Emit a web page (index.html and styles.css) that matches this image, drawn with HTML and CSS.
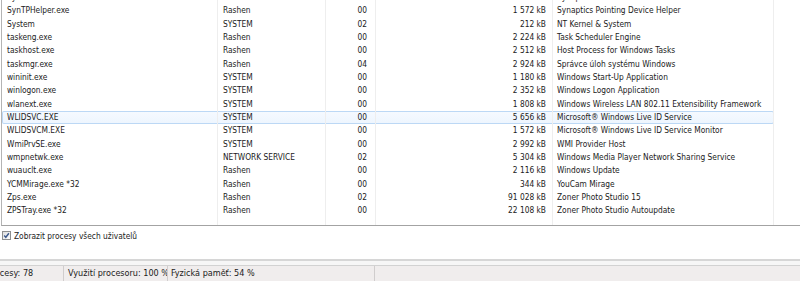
FILE: index.html
```html
<!DOCTYPE html>
<html>
<head>
<meta charset="utf-8">
<link rel="stylesheet" href="styles.css">
</head>
<body>
<div class="window">
  <div class="list">
    <div class="rows">
      <div class="row"><span class="c name">SynTPEnh.exe</span><span class="c user">Rashen</span><span class="c cpu">00</span><span class="c mem">4&nbsp;828 kB</span><span class="c desc">Synaptics TouchPad Enhancements</span></div>
      <div class="row"><span class="c name">SynTPHelper.exe</span><span class="c user">Rashen</span><span class="c cpu">00</span><span class="c mem">1&nbsp;572 kB</span><span class="c desc">Synaptics Pointing Device Helper</span></div>
      <div class="row"><span class="c name">System</span><span class="c user">SYSTEM</span><span class="c cpu">02</span><span class="c mem">212 kB</span><span class="c desc">NT Kernel &amp; System</span></div>
      <div class="row"><span class="c name">taskeng.exe</span><span class="c user">Rashen</span><span class="c cpu">00</span><span class="c mem">2&nbsp;224 kB</span><span class="c desc">Task Scheduler Engine</span></div>
      <div class="row"><span class="c name">taskhost.exe</span><span class="c user">Rashen</span><span class="c cpu">00</span><span class="c mem">2&nbsp;512 kB</span><span class="c desc">Host Process for Windows Tasks</span></div>
      <div class="row"><span class="c name">taskmgr.exe</span><span class="c user">Rashen</span><span class="c cpu">04</span><span class="c mem">2&nbsp;924 kB</span><span class="c desc">Správce úloh systému Windows</span></div>
      <div class="row"><span class="c name">wininit.exe</span><span class="c user">SYSTEM</span><span class="c cpu">00</span><span class="c mem">1&nbsp;180 kB</span><span class="c desc">Windows Start-Up Application</span></div>
      <div class="row"><span class="c name">winlogon.exe</span><span class="c user">SYSTEM</span><span class="c cpu">00</span><span class="c mem">2&nbsp;352 kB</span><span class="c desc">Windows Logon Application</span></div>
      <div class="row"><span class="c name">wlanext.exe</span><span class="c user">SYSTEM</span><span class="c cpu">00</span><span class="c mem">1&nbsp;808 kB</span><span class="c desc">Windows Wireless LAN 802.11 Extensibility Framework</span></div>
      <div class="row selected"><span class="c name">WLIDSVC.EXE</span><span class="c user">SYSTEM</span><span class="c cpu">00</span><span class="c mem">5&nbsp;656 kB</span><span class="c desc">Microsoft® Windows Live ID Service</span></div>
      <div class="row"><span class="c name">WLIDSVCM.EXE</span><span class="c user">SYSTEM</span><span class="c cpu">00</span><span class="c mem">1&nbsp;572 kB</span><span class="c desc">Microsoft® Windows Live ID Service Monitor</span></div>
      <div class="row"><span class="c name">WmiPrvSE.exe</span><span class="c user">SYSTEM</span><span class="c cpu">00</span><span class="c mem">2&nbsp;992 kB</span><span class="c desc">WMI Provider Host</span></div>
      <div class="row"><span class="c name">wmpnetwk.exe</span><span class="c user">NETWORK SERVICE</span><span class="c cpu">02</span><span class="c mem">5&nbsp;304 kB</span><span class="c desc">Windows Media Player Network Sharing Service</span></div>
      <div class="row"><span class="c name">wuauclt.exe</span><span class="c user">Rashen</span><span class="c cpu">00</span><span class="c mem">2&nbsp;116 kB</span><span class="c desc">Windows Update</span></div>
      <div class="row"><span class="c name">YCMMirage.exe *32</span><span class="c user">Rashen</span><span class="c cpu">00</span><span class="c mem">344 kB</span><span class="c desc">YouCam Mirage</span></div>
      <div class="row"><span class="c name">Zps.exe</span><span class="c user">Rashen</span><span class="c cpu">02</span><span class="c mem">91&nbsp;028 kB</span><span class="c desc">Zoner Photo Studio 15</span></div>
      <div class="row"><span class="c name">ZPSTray.exe *32</span><span class="c user">Rashen</span><span class="c cpu">00</span><span class="c mem">22&nbsp;108 kB</span><span class="c desc">Zoner Photo Studio Autoupdate</span></div>
      <div class="row filler"><span class="c name"></span><span class="c user"></span><span class="c cpu"></span><span class="c mem"></span><span class="c desc"></span></div>
    </div>
  </div>
  <div class="options">
    <svg class="check" width="9" height="9" viewBox="0 0 9 9">
      <defs>
        <linearGradient id="cb" x1="0" y1="0" x2="1" y2="1">
          <stop offset="0" stop-color="#dcdcdc"/>
          <stop offset="1" stop-color="#ffffff"/>
        </linearGradient>
      </defs>
      <rect x="0.5" y="0.5" width="8" height="8" fill="url(#cb)" stroke="#8e8f8f"/>
      <path d="M2.2 4.6 L3.8 6.3 L6.9 2.3" fill="none" stroke="#3d5a8c" stroke-width="1.4"/>
    </svg>
    <span class="opt-label">Zobrazit procesy všech uživatelů</span>
  </div>
  <div class="statusbar">
    <div class="panes">
      <div class="pane p1"><span class="shift">Procesy: 78</span></div>
      <div class="pane p2">Využití procesoru: 100 %</div>
      <div class="pane p3">Fyzická paměť: 54 %</div>
      <div class="pane p4"></div>
    </div>
  </div>
</div>
</body>
</html>
```

FILE: styles.css
```css
html, body {
  margin: 0;
  padding: 0;
  background: #ffffff;
}

.window {
  width: 800px;
  height: 281px;
  overflow: hidden;
  display: flex;
  flex-direction: column;
  font-family: "DejaVu Sans Condensed", "DejaVu Sans", sans-serif;
  font-stretch: condensed;
  font-size: 8.3px;
  color: #1b1b1b;
}

.list {
  flex: none;
  height: 226px;
  margin-left: 1px;
  border-left: 1px solid #b4b4b4;
  border-bottom: 1px solid #a3a3a3;
  box-sizing: border-box;
  overflow: hidden;
  background: #ffffff;
}

.rows {
  display: flex;
  flex-direction: column;
  height: calc(100% + 8.9px);
  margin-top: -8.9px;
}

.row {
  flex: none;
  display: flex;
  width: 772px;
  height: 13.333px;
  line-height: 13.333px;
  white-space: nowrap;
  box-sizing: border-box;
}

.row.filler {
  flex: 1;
}

.row.selected {
  background: linear-gradient(#f6faff, #edf5fe);
  box-shadow: inset 0 0 0 1px #bcd8f5;
  border-radius: 2px;
}

.c {
  display: block;
  box-sizing: border-box;
  border-right: 1px solid #eeeeee;
  overflow: hidden;
}

.name {
  width: 216px;
  padding-left: 5px;
}

.user {
  width: 108px;
  padding-left: 5px;
}

.cpu {
  width: 50px;
  text-align: right;
  padding-right: 8px;
}

.mem {
  width: 177px;
  text-align: right;
  padding-right: 6px;
}

.desc {
  width: 221px;
  padding-left: 4px;
}

.options {
  flex: none;
  height: 33px;
  display: flex;
  align-items: flex-start;
  padding: 5px 0 0 2px;
  box-sizing: border-box;
  line-height: 10px;
}

.check {
  display: block;
  flex: none;
}

.opt-label {
  margin-left: 3px;
  line-height: 10px;
}

.statusbar {
  flex: 1;
  border-top: 2px solid #d6d6d6;
  padding-top: 4px;
  background: #f6f6f6;
  display: flex;
  flex-direction: column;
}

.panes {
  flex: 1;
  display: flex;
  border-top: 1px solid #d2d2d2;
  background: #f0eded;
  font-size: 9px;
  line-height: 15px;
  white-space: nowrap;
}

.pane {
  box-sizing: border-box;
  overflow: hidden;
  border-right: 1px solid #d0cdcd;
}

.p1 {
  width: 64px;
}

.shift {
  display: inline-block;
  margin-left: -13px;
}

.p2 {
  width: 104px;
  padding-left: 4px;
}

.p3 {
  width: 207px;
  padding-left: 3px;
}

.p4 {
  flex: 1;
  border-right: none;
}
```
